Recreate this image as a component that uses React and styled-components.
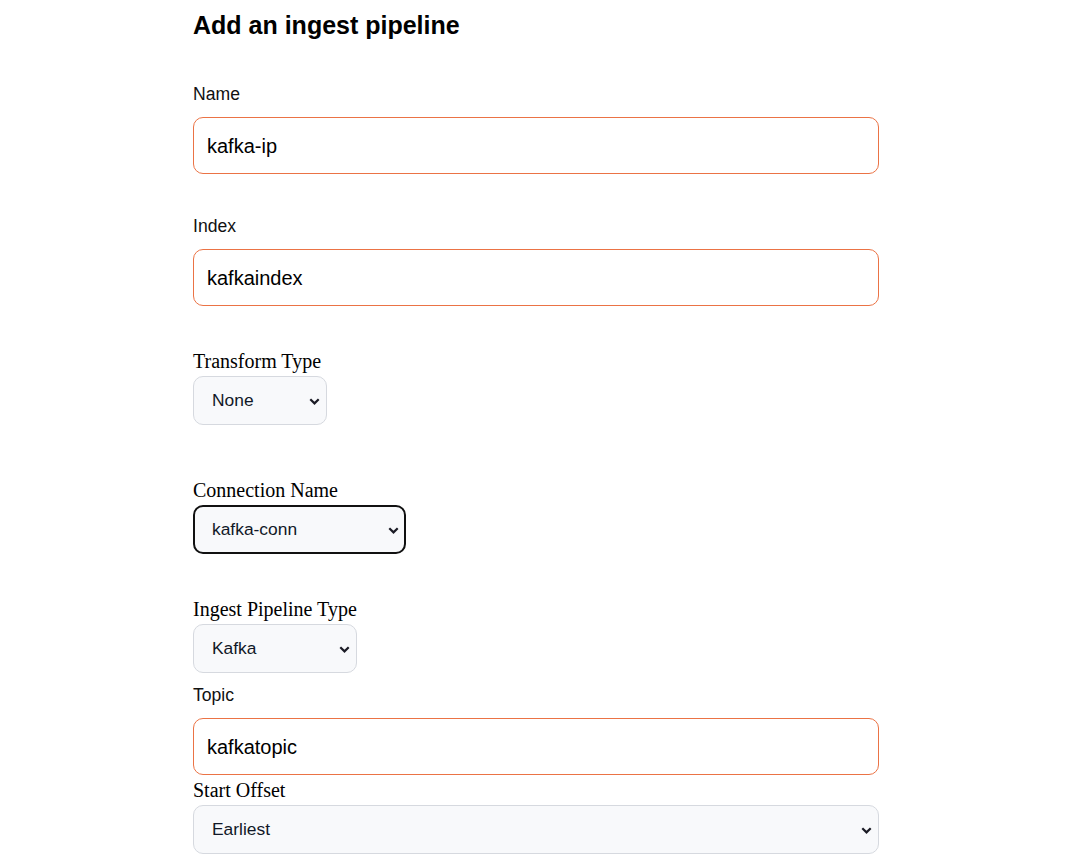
import { styled, createGlobalStyle } from "styled-components";

const GlobalStyle = createGlobalStyle`
   body {
      margin: 0;
      background: #ffffff;
      font-family: "Liberation Sans", Arial, sans-serif;
      color: #111111;
   }
`;

const Form = styled.form`
   display: flex;
   flex-direction: column;
   width: 686px;
   margin-left: 193px;
   padding-top: 11px;
`;

const Title = styled.h1`
   margin: 0;
   font-size: 25px;
   line-height: 29px;
   font-weight: 700;
   color: #000000;
`;

const Field = styled.div`
   display: flex;
   flex-direction: column;
   align-items: flex-start;
   margin-top: ${({ $gap }) => $gap}px;
`;

const Label = styled.label`
   display: block;
   font-size: 17.6px;
   line-height: 20px;
   color: #111111;
   margin-bottom: 13px;
`;

const SerifLabel = styled.label`
   display: block;
   font-family: "Liberation Serif", "Times New Roman", serif;
   font-size: 20px;
   line-height: 23px;
   color: #000000;
   margin-bottom: 3px;
`;

const TextInput = styled.input`
   box-sizing: border-box;
   width: 100%;
   height: 57px;
   padding: 2px 13px 0;
   border: 1px solid #eb7345;
   border-radius: 10px;
   background: #ffffff;
   font-family: "Liberation Sans", Arial, sans-serif;
   font-size: 20px;
   color: #000000;
   outline: none;
`;

const SelectWrap = styled.div`
   position: relative;
   width: ${({ $width }) => ($width ? `${$width}px` : "100%")};
`;

const Select = styled.select`
   box-sizing: border-box;
   width: 100%;
   height: 49px;
   padding: 0 28px 2px ${({ $focused }) => ($focused ? 17 : 18)}px;
   appearance: none;
   border: ${({ $focused }) => ($focused ? "2px solid #111111" : "1px solid #d6d9df")};
   border-radius: 10px;
   background: #f8f9fb;
   font-family: "Liberation Sans", Arial, sans-serif;
   font-size: 17.4px;
   color: #111827;
   outline: none;
`;

const Chevron = styled.svg`
   position: absolute;
   right: 7px;
   top: 50%;
   width: 11px;
   height: 7px;
   margin-top: -3px;
   pointer-events: none;
`;

const Dropdown = ({ width, focused, value, options }) => (
   <SelectWrap $width={width}>
      <Select $focused={focused} defaultValue={value}>
         {options.map((opt) => (
            <option key={opt}>{opt}</option>
         ))}
      </Select>
      <Chevron viewBox="0 0 11 7">
         <path d="M1.3 1.3 L5.5 5.4 L9.7 1.3" fill="none" stroke="#1b1b25" strokeWidth="2.2" />
      </Chevron>
   </SelectWrap>
);

export default function App() {
   return (
      <>
         <GlobalStyle />
         <Form onSubmit={(e) => e.preventDefault()}>
            <Title>Add an ingest pipeline</Title>

            <Field $gap={44}>
               <Label>Name</Label>
               <TextInput defaultValue="kafka-ip" />
            </Field>

            <Field $gap={42}>
               <Label>Index</Label>
               <TextInput defaultValue="kafkaindex" />
            </Field>

            <Field $gap={44}>
               <SerifLabel>Transform Type</SerifLabel>
               <Dropdown width={134} value="None" options={["None", "Lambda"]} />
            </Field>

            <Field $gap={54}>
               <SerifLabel>Connection Name</SerifLabel>
               <Dropdown width={213} focused value="kafka-conn" options={["kafka-conn"]} />
            </Field>

            <Field $gap={44}>
               <SerifLabel>Ingest Pipeline Type</SerifLabel>
               <Dropdown width={164} value="Kafka" options={["Kafka", "Kinesis"]} />
            </Field>

            <Field $gap={12}>
               <Label>Topic</Label>
               <TextInput defaultValue="kafkatopic" />
            </Field>

            <Field $gap={4}>
               <SerifLabel>Start Offset</SerifLabel>
               <Dropdown value="Earliest" options={["Earliest", "Latest"]} />
            </Field>
         </Form>
      </>
   );
}
